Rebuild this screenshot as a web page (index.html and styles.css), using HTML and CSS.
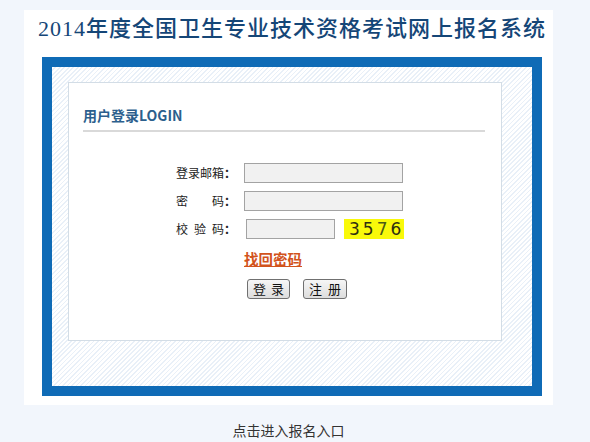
FILE: index.html
```html
<!DOCTYPE html>
<html lang="zh-CN">
<head>
<meta charset="utf-8">
<title>2014年度全国卫生专业技术资格考试网上报名系统</title>
<link rel="stylesheet" href="styles.css">
</head>
<body>
<div class="page">
  <div class="panel">
    <h1 class="title"><span class="num">2014</span>年度全国卫生专业技术资格考试网上报名系统</h1>
    <div class="frame">
      <div class="box">
        <h2 class="box-head">用户登录LOGIN</h2>
        <form class="form">
          <div class="row">
            <label class="lbl"><span class="chars"><span>登</span><span>录</span><span>邮</span><span>箱</span></span><span class="colon">：</span></label>
            <input class="field" type="text">
          </div>
          <div class="row">
            <label class="lbl"><span class="chars"><span>密</span><span>码</span></span><span class="colon">：</span></label>
            <input class="field" type="password">
          </div>
          <div class="row">
            <label class="lbl"><span class="chars"><span>校</span><span>验</span><span>码</span></span><span class="colon">：</span></label>
            <input class="field field-code" type="text">
            <span class="captcha"><span class="d1">3</span><span class="d2">5</span><span class="d3">7</span><span class="d4">6</span></span>
          </div>
          <div class="link-row"><a class="forgot" href="#">找回密码</a></div>
          <div class="btn-row">
            <button class="btn" type="button"><span>登</span><span>录</span></button>
            <button class="btn btn-wide" type="button"><span>注</span><span>册</span></button>
          </div>
        </form>
      </div>
    </div>
  </div>
  <div class="foot">点击进入报名入口</div>
</div>
</body>
</html>
```
FILE: styles.css
```css
html, body {
  margin: 0;
  padding: 0;
}
body {
  background: #f2f6fc;
  font-family: "Noto Sans CJK SC", "Liberation Sans", sans-serif;
  color: #222;
}
.page {
  width: 529px;
  margin-left: 24px;
  padding-top: 10px;
}
.panel {
  background: #ffffff;
  padding-bottom: 9px;
}
.title {
  margin: 0 0 14px 0;
  padding-left: 14px;
  font-size: 22px;
  line-height: 33px;
  height: 33px;
  font-weight: 500;
  letter-spacing: 1px;
  color: #154677;
  white-space: nowrap;
}
.num {
  font-family: "Liberation Serif", serif;
}
.frame {
  margin-left: 18px;
  width: 464px;
  height: 304px;
  border: 10px solid #0f6bb6;
  padding: 15px 0 0 16px;
  background: repeating-linear-gradient(135deg, #ffffff 0, #ffffff 2px, #e9f0f8 2px, #e9f0f8 3.2px);
  display: flex;
  flex-direction: column;
  align-items: flex-start;
}
.box {
  width: 432px;
  height: 257px;
  border: 1px solid #d3dde6;
  background: #ffffff;
}
.box-head {
  margin: 0 16px 0 14px;
  padding-top: 22px;
  padding-bottom: 5px;
  line-height: 20px;
  font-size: 14px;
  font-weight: bold;
  color: #2c5f8d;
  border-bottom: 2px solid #d9d9d9;
}
.form {
  margin: 0;
  padding: 27px 0 0 107px;
}
.row {
  display: flex;
  align-items: center;
  height: 28px;
}
.lbl {
  width: 60px;
  margin-right: 8px;
  display: flex;
  font-size: 12px;
  line-height: 20px;
  color: #222;
}
.chars {
  width: 48px;
  display: flex;
  justify-content: space-between;
}
.colon {
  width: 12px;
  font-weight: bold;
}
.field {
  width: 159px;
  height: 20px;
  box-sizing: border-box;
  border: 1px solid #a3a3a3;
  background: #f1f1f1;
  margin: 0;
  padding: 0 2px;
}
.field-code {
  width: 89px;
  margin-left: 2px;
}
.captcha {
  margin-left: 9px;
  width: 60px;
  height: 20px;
  background: #f9f90a;
  font-family: "DejaVu Sans", sans-serif;
  font-size: 17px;
  line-height: 20px;
  letter-spacing: 3px;
  text-indent: 5px;
  color: #2e2e10;
  white-space: nowrap;
  overflow: hidden;
}
.d3 {
  color: #4a5a18;
}
.link-row {
  margin-top: 5px;
  padding-left: 68px;
  height: 20px;
  line-height: 20px;
}
.forgot {
  font-size: 14.5px;
  font-weight: bold;
  color: #d2531c;
  text-decoration: underline;
}
.btn-row {
  margin-top: 11px;
  padding-left: 71px;
  display: flex;
  gap: 13px;
}
.btn {
  height: 20px;
  width: 43px;
  padding: 0 5px;
  margin: 0;
  display: flex;
  justify-content: space-between;
  align-items: center;
  font-family: "Noto Sans CJK SC", sans-serif;
  font-size: 13px;
  line-height: 18px;
  color: #111;
  border: 1px solid #707070;
  border-radius: 3px;
  background: linear-gradient(#f6f6f6, #dddddd);
}
.btn-wide {
  width: 44px;
}
.foot {
  margin-top: 15px;
  text-align: center;
  font-size: 14px;
  line-height: 20px;
  color: #333;
}
```
